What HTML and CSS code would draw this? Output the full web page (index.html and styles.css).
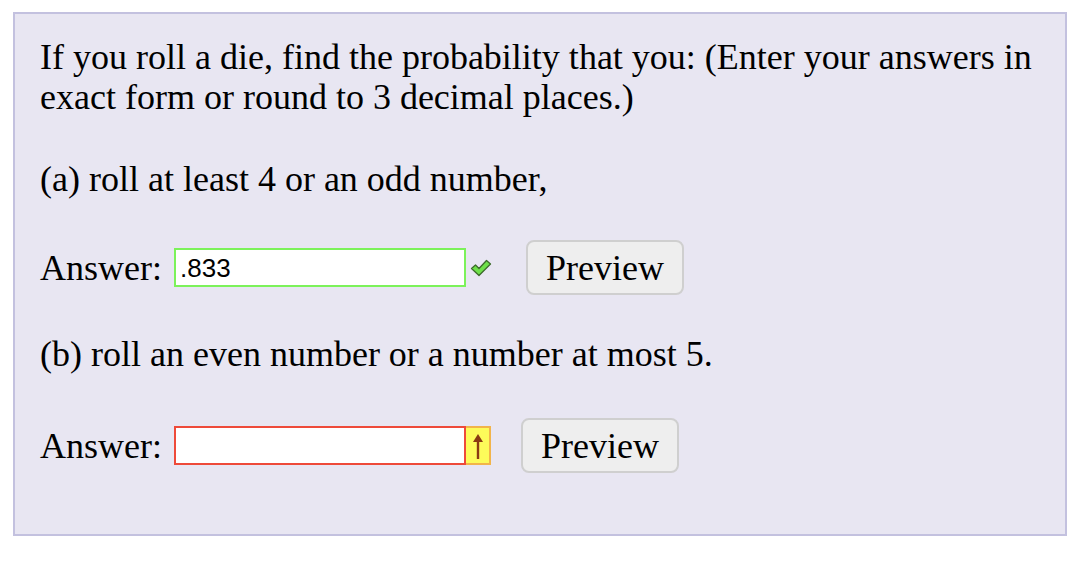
FILE: index.html
```html
<!DOCTYPE html>
<html lang="en">
<head>
    <meta charset="UTF-8">
    <meta name="viewport" content="width=device-width, initial-scale=1.0">
    <title>Problema</title>
    <link rel="stylesheet" href="styles.css">
</head>
<body>
    <div class="problem">
        <p class="intro">If you roll a die, find the probability that you: (Enter your answers in exact form or round to 3 decimal places.)</p>

        <p class="part">(a) roll at least 4 or an odd number,</p>
        <div class="answer-row row-a">
            <label for="ansA">Answer:</label>
            <input type="text" id="ansA" class="answer correct" value=".833">
            <span class="mark-ok" aria-label="correcto">
                <svg width="22" height="18" viewBox="0 0 22 18">
                    <path d="M1.5 9.5 L5.5 6 L9 9.5 L16.5 1.5 L20.5 5 L9 16.5 Z" fill="#6ee04a" stroke="#3d6b2c" stroke-width="1.3" stroke-linejoin="round"/>
                </svg>
            </span>
            <button type="button" class="preview">Preview</button>
        </div>

        <p class="part part-b">(b) roll an even number or a number at most 5.</p>
        <div class="answer-row row-b">
            <label for="ansB">Answer:</label>
            <input type="text" id="ansB" class="answer wrong" value="">
            <span class="mark-empty" aria-label="sin respuesta">
                <svg width="12" height="28" viewBox="0 0 12 28">
                    <path d="M6 27 L6 6" stroke="#8a3a12" stroke-width="2.4"/>
                    <path d="M1 10 L6 2 L11 10 Z" fill="#8a3a12"/>
                </svg>
            </span>
            <button type="button" class="preview">Preview</button>
        </div>
    </div>
</body>
</html>
```

FILE: styles.css
```css
body {
    margin: 0;
    background-color: #ffffff;
    font-family: "Liberation Serif", "Times New Roman", serif;
    color: #000;
}

.problem {
    margin: 12px 21px 0 13px;
    height: 497px;
    border: 2px solid #c3c1df;
    background-color: #e8e6f2;
    padding: 23px 20px 0 25px;
    font-size: 36px;
    line-height: 40px;
}

.problem p {
    margin: 0;
}

.part {
    padding-top: 42px;
}

.part-b {
    padding-top: 39px;
}

.answer-row {
    display: flex;
    align-items: center;
    height: 55px;
}

.row-a {
    margin-top: 41px;
}

.row-b {
    margin-top: 44px;
}

.answer-row label {
    width: 134px;
}

.answer {
    width: 292px;
    height: 39px;
    box-sizing: border-box;
    padding: 2px 4px 0 4px;
    font-family: "Liberation Sans", Arial, sans-serif;
    font-size: 26px;
    background: #fff;
    outline: none;
}

.correct {
    border: 2px solid #7cf25a;
}

.wrong {
    border: 2px solid #ee4a3a;
}

.mark-ok {
    display: flex;
    margin-left: 4px;
    margin-right: 34px;
}

.mark-empty {
    display: flex;
    justify-content: center;
    align-items: center;
    width: 25px;
    height: 39px;
    box-sizing: border-box;
    border: 2px solid #f2b44a;
    border-left: none;
    background-color: #fdfb5a;
    margin-right: 30px;
}

.preview {
    font-family: "Liberation Serif", "Times New Roman", serif;
    font-size: 36px;
    line-height: 40px;
    height: 55px;
    padding: 0 18px;
    border: 2px solid #cfcfcf;
    border-radius: 8px;
    background-color: #eeeeee;
    color: #000;
}
```
